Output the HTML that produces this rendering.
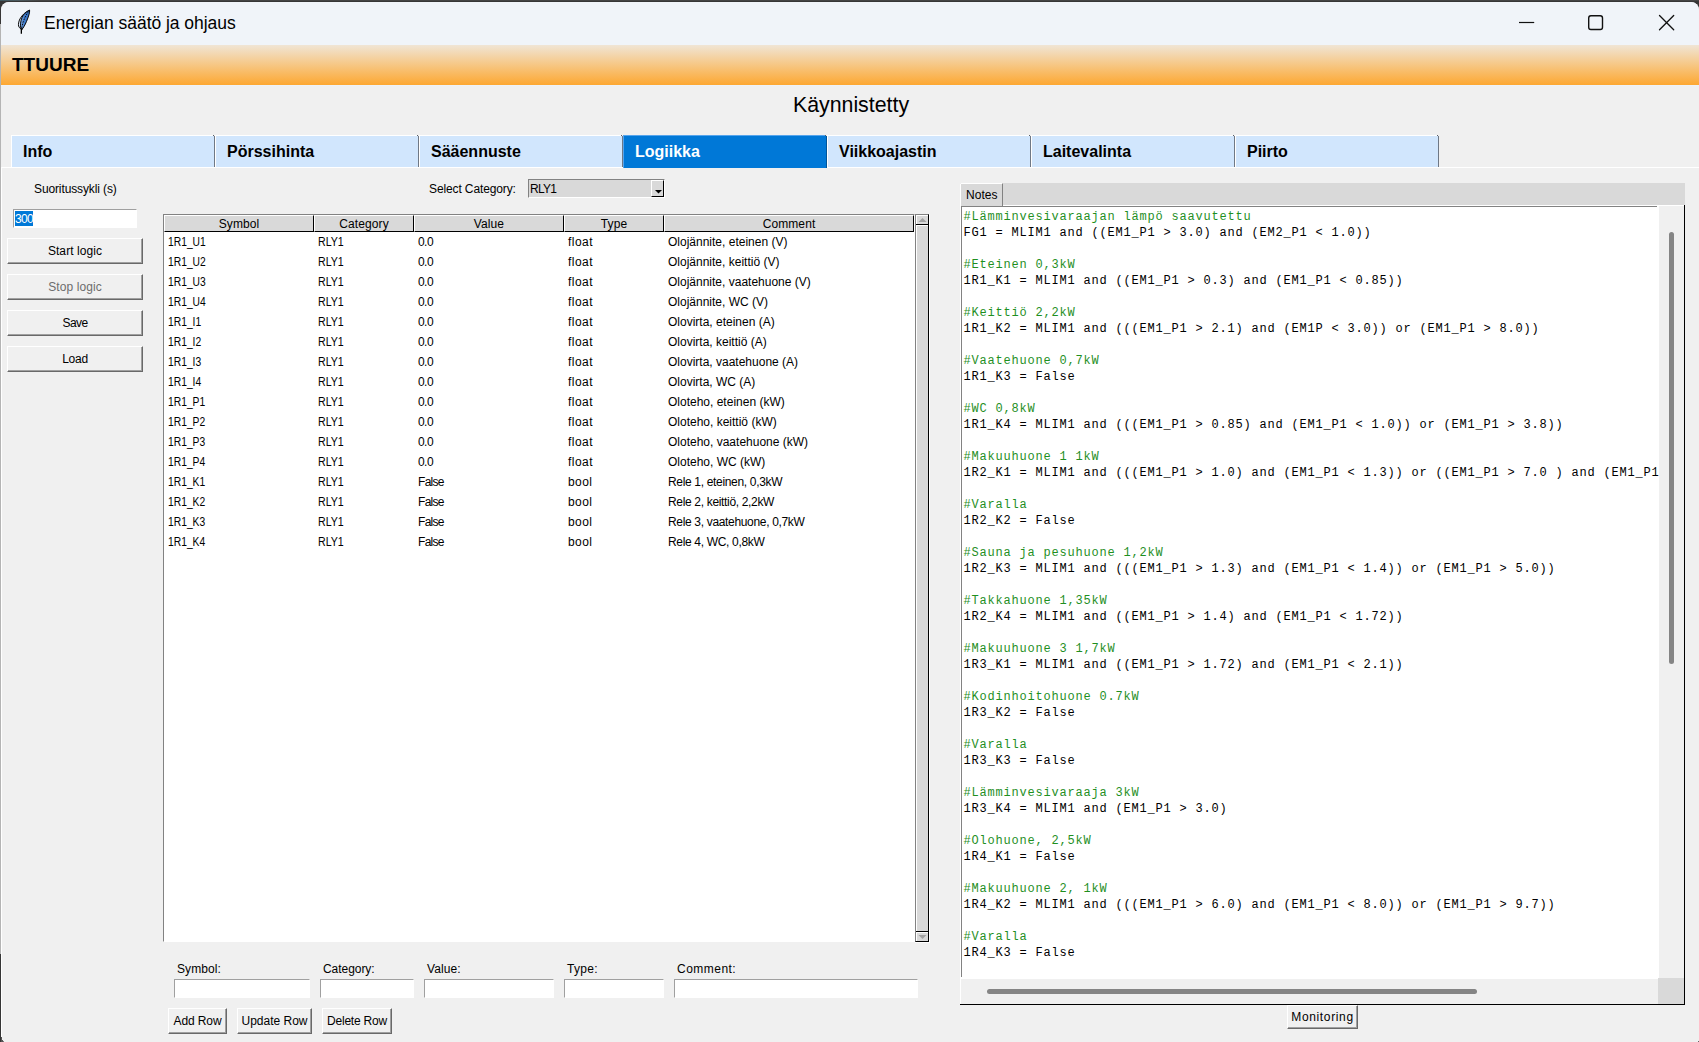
<!DOCTYPE html>
<html lang="fi"><head><meta charset="utf-8"><title>Energian säätö ja ohjaus</title>
<style>
html,body{margin:0;padding:0}
body{width:1699px;height:1042px;position:relative;overflow:hidden;background:#363636;font-family:"Liberation Sans",sans-serif;font-size:12px;color:#000;line-height:1}
div{position:absolute;box-sizing:border-box}
span{white-space:pre}
.t{position:absolute;white-space:pre;line-height:14px;height:14px;letter-spacing:0}
#topstrip{left:0;top:0;width:1699px;height:1px;background:linear-gradient(90deg,#3f5962 0,#4a5a60 18px,#444 40px,#444 100%)}
#edge{left:0;top:24px;width:1px;height:930px;background:#b4b4b4}
#win{left:1px;top:2px;width:1698px;height:1040px;background:#f0f0f0;border-radius:8px 8px 0 0}
#titlebar{left:1px;top:2px;width:1698px;height:43px;background:#f0f4f9;border-radius:8px 8px 0 0}
#title{left:44px;top:12px;font-size:17.5px;line-height:22px;white-space:pre;letter-spacing:-0.04px}
#hdr{left:1px;top:45px;width:1698px;height:40px;background:linear-gradient(#f0e5d5,#fda832)}
#hdrline{left:1px;top:85px;width:1698px;height:1px;background:#eef2f7}
#brand{left:12px;top:54px;font-weight:bold;font-size:19px;line-height:22px;white-space:pre}
#status{left:2px;top:93px;width:1698px;text-align:center;font-size:21.33px;line-height:25px;white-space:pre}
.tab{top:135px;width:204px;height:32px;background:#d1e6fd;border-left:1px solid #fff;border-top:1px solid #fff;border-right:1px solid #6f7885;margin-left:-1px}
.tab::after{content:"";position:absolute;right:-1px;top:-1px;width:1px;height:1px;background:#f0f0f0}
.tab::before{content:"";position:absolute;right:0;top:-1px;width:1px;height:1px;background:#5a5f66}
.tab span{position:absolute;left:11px;top:6px;font-weight:bold;font-size:16px;line-height:20px}
.tab.sel{background:#0078d7;height:33px;border-left-color:#55a4ec;border-top-color:#55a4ec;border-right-color:#00559a}
.tab.sel span{color:#fff}
#paneTop{left:1px;top:167px;width:1698px;height:1px;background:#fff}
#paneLeft{left:1px;top:167px;width:1px;height:875px;background:#fff}
.btn{background:#f0f0f0;border:1px solid;border-color:#fff #696969 #696969 #fff;box-shadow:inset -1px -1px 0 #a0a0a0, inset 1px 1px 0 #f0f0f0;text-align:center;letter-spacing:0.2px;white-space:pre}
.btn.dis{color:#6d6d6d}
.entry{background:#fff;border:1px solid;border-color:#a0a0a0 #fff #fff #a0a0a0}
.tree{left:164px;top:215px;width:750px;height:726px;background:#fff}
#treeBorder{left:163px;top:214px;width:752px;height:728px;border:1px solid;border-color:#828282 #fff #fff #828282;background:#fff}
.th{top:0;height:17px;background:#d9d9d9;border:1px solid;border-color:#fff #000 #000 #fff;text-align:center;line-height:17px;letter-spacing:0.1px}
.tr{left:0;width:750px;height:20px;line-height:20px}
.td{position:absolute;top:0}
.c0{display:inline-block;transform:scaleX(0.858);transform-origin:0 0}
.c1{display:inline-block;transform:scaleX(0.885);transform-origin:0 0}
.c2{letter-spacing:-0.55px}
.c3{letter-spacing:0.45px}
.c4{letter-spacing:0}
.notes{left:961px;top:206px;width:698px;height:773px;background:#fff;padding:1px 0 0 1px;overflow:hidden}
.notes-inner{left:2.4px;top:3px;font-family:"Liberation Mono",monospace;font-size:12px;letter-spacing:0.8px;line-height:16px}
.ln{position:static;height:16px;white-space:pre}
.ln.c{color:#1f8f1f}

</style></head>
<body>
<div id="topstrip"></div>
<div id="edge"></div>
<div id="win"></div>
<div id="titlebar"></div>
<svg style="position:absolute;left:14px;top:8px" width="20" height="28" viewBox="0 0 20 28">
<defs><linearGradient id="fg" x1="0" y1="0" x2="1" y2="0"><stop offset="0" stop-color="#7ea9e3"/><stop offset="0.45" stop-color="#3f7bcb"/><stop offset="1" stop-color="#2f6ec2"/></linearGradient></defs>
<path d="M15.6 2.2 C11.6 3.8 8.2 6.8 5.9 11 C4.6 13.6 4.2 16.6 4.6 18 C4.9 19.2 5.6 20 6.6 20.6 L8 21.3 Z" fill="#dfe8f6" stroke="#000" stroke-width="0.95" stroke-linejoin="round"/>
<path d="M15.6 2.2 C15.9 4.5 14.6 8.5 12.5 13.5 C11 17 9.3 20 8.0 21.3 L6.9 20.2 C6.0 17.5 6.5 13 8.1 9.3 C9.5 6.2 12 3.8 15.6 2.2 Z" fill="url(#fg)" stroke="#000" stroke-width="0.95" stroke-linejoin="round"/>
<path d="M14.6 3.6 C11.8 7 9.6 12 8.6 16 C8.2 17.6 7.9 19 7.7 20" fill="none" stroke="#000" stroke-width="0.9" stroke-dasharray="1.6 1.1"/>
<path d="M6.2 19.9 L8.5 21 L8.0 22.2 L8.0 25.7 L6.7 25.7 L6.7 22 Z" fill="#000"/>
</svg>
<div id="title">Energian säätö ja ohjaus</div>
<svg style="position:absolute;left:1510px;top:8px" width="180" height="30" viewBox="0 0 180 30">
<path d="M9 14.5 H24.2" stroke="#111" stroke-width="1.2" fill="none"/>
<rect x="78.7" y="7.7" width="13.8" height="13.8" rx="2.2" ry="2.2" fill="none" stroke="#111" stroke-width="1.4"/>
<path d="M149.5 7.5 L163.7 21.7 M163.7 7.5 L149.5 21.7" stroke="#111" stroke-width="1.3" fill="none" stroke-linecap="round"/>
</svg>
<div id="hdr"></div>
<div id="hdrline"></div>
<div id="brand">TTUURE</div>
<div id="status">Käynnistetty</div>
<div id="paneTop"></div>
<div id="paneLeft"></div>
<div class="tab" style="left:12px"><span>Info</span></div>
<div class="tab" style="left:216px"><span>Pörssihinta</span></div>
<div class="tab" style="left:420px"><span>Sääennuste</span></div>
<div class="tab sel" style="left:624px"><span>Logiikka</span></div>
<div class="tab" style="left:828px"><span>Viikkoajastin</span></div>
<div class="tab" style="left:1032px"><span>Laitevalinta</span></div>
<div class="tab" style="left:1236px"><span>Piirto</span></div>
<div class="t" style="left:34px;top:182px;letter-spacing:-0.12px">Suoritussykli (s)</div>
<div class="entry" style="left:13px;top:209px;width:124px;height:19px"></div>
<div style="left:15px;top:211px;width:18px;height:15px;background:#0078d7"></div>
<div class="t" style="left:15px;top:212px;color:#fff;letter-spacing:-0.7px">300</div>
<div class="btn" style="left:7px;top:238px;width:136px;height:26px;line-height:24px;letter-spacing:0.08px">Start logic</div>
<div class="btn dis" style="left:7px;top:274px;width:136px;height:26px;line-height:24px;letter-spacing:0.08px">Stop logic</div>
<div class="btn" style="left:7px;top:310px;width:136px;height:26px;line-height:24px;letter-spacing:-0.55px">Save</div>
<div class="btn" style="left:7px;top:346px;width:136px;height:26px;line-height:24px;letter-spacing:-0.25px">Load</div>
<div class="t" style="left:429px;top:182px;letter-spacing:-0.12px">Select Category:</div>
<div id="combo" style="left:528px;top:179px;width:137px;height:19px;background:#d9d9d9;border:1px solid;border-color:#828282 #fff #fff #828282"></div>
<div class="t" style="left:530px;top:182px;letter-spacing:-0.75px">RLY1</div>
<div style="left:651px;top:180px;width:13px;height:17px;background:#d9d9d9;border:1px solid;border-color:#fff #000 #000 #fff"></div>
<svg style="position:absolute;left:654px;top:189px" width="9" height="6" viewBox="0 0 9 6"><path d="M1 1 H8 L4.5 4.5 Z" fill="#000"/></svg>
<div id="treeBorder"></div>
<div class="tree">
<div class="th" style="left:0px;width:150px"><span>Symbol</span></div>
<div class="th" style="left:150px;width:100px"><span>Category</span></div>
<div class="th" style="left:250px;width:150px"><span>Value</span></div>
<div class="th" style="left:400px;width:100px"><span>Type</span></div>
<div class="th" style="left:500px;width:250px"><span>Comment</span></div>
<div class="tr" style="top:17px"><span class="td c0" style="left:4px">1R1_U1</span><span class="td c1" style="left:154px">RLY1</span><span class="td c2" style="left:254px">0.0</span><span class="td c3" style="left:404px">float</span><span class="td c4" style="left:504px">Olojännite, eteinen (V)</span></div>
<div class="tr" style="top:37px"><span class="td c0" style="left:4px">1R1_U2</span><span class="td c1" style="left:154px">RLY1</span><span class="td c2" style="left:254px">0.0</span><span class="td c3" style="left:404px">float</span><span class="td c4" style="left:504px">Olojännite, keittiö (V)</span></div>
<div class="tr" style="top:57px"><span class="td c0" style="left:4px">1R1_U3</span><span class="td c1" style="left:154px">RLY1</span><span class="td c2" style="left:254px">0.0</span><span class="td c3" style="left:404px">float</span><span class="td c4" style="left:504px">Olojännite, vaatehuone (V)</span></div>
<div class="tr" style="top:77px"><span class="td c0" style="left:4px">1R1_U4</span><span class="td c1" style="left:154px">RLY1</span><span class="td c2" style="left:254px">0.0</span><span class="td c3" style="left:404px">float</span><span class="td c4" style="left:504px">Olojännite, WC (V)</span></div>
<div class="tr" style="top:97px"><span class="td c0" style="left:4px">1R1_I1</span><span class="td c1" style="left:154px">RLY1</span><span class="td c2" style="left:254px">0.0</span><span class="td c3" style="left:404px">float</span><span class="td c4" style="left:504px">Olovirta, eteinen (A)</span></div>
<div class="tr" style="top:117px"><span class="td c0" style="left:4px">1R1_I2</span><span class="td c1" style="left:154px">RLY1</span><span class="td c2" style="left:254px">0.0</span><span class="td c3" style="left:404px">float</span><span class="td c4" style="left:504px">Olovirta, keittiö (A)</span></div>
<div class="tr" style="top:137px"><span class="td c0" style="left:4px">1R1_I3</span><span class="td c1" style="left:154px">RLY1</span><span class="td c2" style="left:254px">0.0</span><span class="td c3" style="left:404px">float</span><span class="td c4" style="left:504px">Olovirta, vaatehuone (A)</span></div>
<div class="tr" style="top:157px"><span class="td c0" style="left:4px">1R1_I4</span><span class="td c1" style="left:154px">RLY1</span><span class="td c2" style="left:254px">0.0</span><span class="td c3" style="left:404px">float</span><span class="td c4" style="left:504px">Olovirta, WC (A)</span></div>
<div class="tr" style="top:177px"><span class="td c0" style="left:4px">1R1_P1</span><span class="td c1" style="left:154px">RLY1</span><span class="td c2" style="left:254px">0.0</span><span class="td c3" style="left:404px">float</span><span class="td c4" style="left:504px">Oloteho, eteinen (kW)</span></div>
<div class="tr" style="top:197px"><span class="td c0" style="left:4px">1R1_P2</span><span class="td c1" style="left:154px">RLY1</span><span class="td c2" style="left:254px">0.0</span><span class="td c3" style="left:404px">float</span><span class="td c4" style="left:504px">Oloteho, keittiö (kW)</span></div>
<div class="tr" style="top:217px"><span class="td c0" style="left:4px">1R1_P3</span><span class="td c1" style="left:154px">RLY1</span><span class="td c2" style="left:254px">0.0</span><span class="td c3" style="left:404px">float</span><span class="td c4" style="left:504px">Oloteho, vaatehuone (kW)</span></div>
<div class="tr" style="top:237px"><span class="td c0" style="left:4px">1R1_P4</span><span class="td c1" style="left:154px">RLY1</span><span class="td c2" style="left:254px">0.0</span><span class="td c3" style="left:404px">float</span><span class="td c4" style="left:504px">Oloteho, WC (kW)</span></div>
<div class="tr" style="top:257px"><span class="td c0" style="left:4px">1R1_K1</span><span class="td c1" style="left:154px">RLY1</span><span class="td c2" style="left:254px;letter-spacing:-0.7px">False</span><span class="td c3" style="left:404px">bool</span><span class="td c4" style="left:504px;letter-spacing:-0.33px">Rele 1, eteinen, 0,3kW</span></div>
<div class="tr" style="top:277px"><span class="td c0" style="left:4px">1R1_K2</span><span class="td c1" style="left:154px">RLY1</span><span class="td c2" style="left:254px;letter-spacing:-0.7px">False</span><span class="td c3" style="left:404px">bool</span><span class="td c4" style="left:504px;letter-spacing:-0.33px">Rele 2, keittiö, 2,2kW</span></div>
<div class="tr" style="top:297px"><span class="td c0" style="left:4px">1R1_K3</span><span class="td c1" style="left:154px">RLY1</span><span class="td c2" style="left:254px;letter-spacing:-0.7px">False</span><span class="td c3" style="left:404px">bool</span><span class="td c4" style="left:504px;letter-spacing:-0.33px">Rele 3, vaatehuone, 0,7kW</span></div>
<div class="tr" style="top:317px"><span class="td c0" style="left:4px">1R1_K4</span><span class="td c1" style="left:154px">RLY1</span><span class="td c2" style="left:254px;letter-spacing:-0.7px">False</span><span class="td c3" style="left:404px">bool</span><span class="td c4" style="left:504px;letter-spacing:-0.33px">Rele 4, WC, 0,8kW</span></div>
</div>
<div id="tsb" style="left:915px;top:214px;width:14px;height:728px;background:#d9d9d9;border:1px solid;border-color:#828282 #000 #000 #828282"></div>
<div style="left:929px;top:214px;width:1px;height:729px;background:#fff"></div>
<div style="left:915px;top:942px;width:15px;height:1px;background:#fff"></div>
<div style="left:916px;top:215px;width:1px;height:726px;background:#fff"></div>
<div style="left:916px;top:215px;width:12px;height:1px;background:#fff"></div>
<div style="left:916px;top:225px;width:12px;height:1px;background:#fff"></div>
<div style="left:916px;top:932px;width:12px;height:1px;background:#fff"></div>
<div style="left:916px;top:224px;width:12px;height:1px;background:#000"></div>
<div style="left:916px;top:931px;width:12px;height:1px;background:#000"></div>
<svg style="position:absolute;left:918px;top:217px" width="9" height="6" viewBox="0 0 9 6"><path d="M0.5 5 L4.5 1 L8.5 5 Z" fill="#a3a3a3"/></svg>
<svg style="position:absolute;left:918px;top:934px" width="9" height="6" viewBox="0 0 9 6"><path d="M0.5 1 L4.5 5 L8.5 1 Z" fill="#a3a3a3"/></svg>
<div class="t" style="left:177px;top:962px;letter-spacing:0.1px">Symbol:</div>
<div class="t" style="left:323px;top:962px;letter-spacing:-0.05px">Category:</div>
<div class="t" style="left:427px;top:962px;letter-spacing:0.07px">Value:</div>
<div class="t" style="left:567px;top:962px;letter-spacing:0.3px">Type:</div>
<div class="t" style="left:677px;top:962px;letter-spacing:0.48px">Comment:</div>
<div class="entry" style="left:174px;top:979px;width:136px;height:19px"></div>
<div class="entry" style="left:320px;top:979px;width:94px;height:19px"></div>
<div class="entry" style="left:424px;top:979px;width:130px;height:19px"></div>
<div class="entry" style="left:564px;top:979px;width:100px;height:19px"></div>
<div class="entry" style="left:674px;top:979px;width:244px;height:19px"></div>
<div class="btn" style="left:168px;top:1008px;width:59px;height:26px;line-height:24px;letter-spacing:-0.1px">Add Row</div>
<div class="btn" style="left:237px;top:1008px;width:75px;height:26px;line-height:24px;letter-spacing:0px">Update Row</div>
<div class="btn" style="left:322px;top:1008px;width:70px;height:26px;line-height:24px;letter-spacing:-0.2px">Delete Row</div>
<div id="nbbar" style="left:1003px;top:183px;width:682px;height:22px;background:#d9d9d9"></div>
<div id="nbtab" style="left:960px;top:183px;width:43px;height:23px;background:#d9d9d9;border-left:1px solid #fff;border-top:1px solid #fff;border-right:1px solid #828282"></div>
<div class="t" style="left:966px;top:188px;letter-spacing:0.05px">Notes</div>
<div style="left:960px;top:183px;width:1px;height:1px;background:#f0f0f0"></div>
<div style="left:1003px;top:205px;width:682px;height:1px;background:#fff"></div>
<div style="left:960px;top:206px;width:1px;height:799px;background:#fff"></div>
<div class="notes"><div class="notes-inner"><div class="ln c">#Lämminvesivaraajan lämpö saavutettu</div><div class="ln">FG1 = MLIM1 and ((EM1_P1 &gt; 3.0) and (EM2_P1 &lt; 1.0))</div><div class="ln">&nbsp;</div><div class="ln c">#Eteinen 0,3kW</div><div class="ln">1R1_K1 = MLIM1 and ((EM1_P1 &gt; 0.3) and (EM1_P1 &lt; 0.85))</div><div class="ln">&nbsp;</div><div class="ln c">#Keittiö 2,2kW</div><div class="ln">1R1_K2 = MLIM1 and (((EM1_P1 &gt; 2.1) and (EM1P &lt; 3.0)) or (EM1_P1 &gt; 8.0))</div><div class="ln">&nbsp;</div><div class="ln c">#Vaatehuone 0,7kW</div><div class="ln">1R1_K3 = False</div><div class="ln">&nbsp;</div><div class="ln c">#WC 0,8kW</div><div class="ln">1R1_K4 = MLIM1 and (((EM1_P1 &gt; 0.85) and (EM1_P1 &lt; 1.0)) or (EM1_P1 &gt; 3.8))</div><div class="ln">&nbsp;</div><div class="ln c">#Makuuhuone 1 1kW</div><div class="ln">1R2_K1 = MLIM1 and (((EM1_P1 &gt; 1.0) and (EM1_P1 &lt; 1.3)) or ((EM1_P1 &gt; 7.0 ) and (EM1_P1 &lt; 8.0)))</div><div class="ln">&nbsp;</div><div class="ln c">#Varalla</div><div class="ln">1R2_K2 = False</div><div class="ln">&nbsp;</div><div class="ln c">#Sauna ja pesuhuone 1,2kW</div><div class="ln">1R2_K3 = MLIM1 and (((EM1_P1 &gt; 1.3) and (EM1_P1 &lt; 1.4)) or (EM1_P1 &gt; 5.0))</div><div class="ln">&nbsp;</div><div class="ln c">#Takkahuone 1,35kW</div><div class="ln">1R2_K4 = MLIM1 and ((EM1_P1 &gt; 1.4) and (EM1_P1 &lt; 1.72))</div><div class="ln">&nbsp;</div><div class="ln c">#Makuuhuone 3 1,7kW</div><div class="ln">1R3_K1 = MLIM1 and ((EM1_P1 &gt; 1.72) and (EM1_P1 &lt; 2.1))</div><div class="ln">&nbsp;</div><div class="ln c">#Kodinhoitohuone 0.7kW</div><div class="ln">1R3_K2 = False</div><div class="ln">&nbsp;</div><div class="ln c">#Varalla</div><div class="ln">1R3_K3 = False</div><div class="ln">&nbsp;</div><div class="ln c">#Lämminvesivaraaja 3kW</div><div class="ln">1R3_K4 = MLIM1 and (EM1_P1 &gt; 3.0)</div><div class="ln">&nbsp;</div><div class="ln c">#Olohuone, 2,5kW</div><div class="ln">1R4_K1 = False</div><div class="ln">&nbsp;</div><div class="ln c">#Makuuhuone 2, 1kW</div><div class="ln">1R4_K2 = MLIM1 and (((EM1_P1 &gt; 6.0) and (EM1_P1 &lt; 8.0)) or (EM1_P1 &gt; 9.7))</div><div class="ln">&nbsp;</div><div class="ln c">#Varalla</div><div class="ln">1R4_K3 = False</div><div class="ln">&nbsp;</div></div></div>
<div style="left:961px;top:206px;width:696px;height:1px;background:#828282"></div>
<div style="left:961px;top:206px;width:1px;height:771px;background:#828282"></div>
<div style="left:1659px;top:207px;width:25px;height:772px;background:#f0f0f0"></div>
<div style="left:962px;top:979px;width:697px;height:25px;background:#f0f0f0"></div>
<div style="left:1658px;top:978px;width:26px;height:26px;background:#d9d9d9"></div>
<div style="left:1684px;top:205px;width:1px;height:800px;background:#000"></div>
<div style="left:960px;top:1004px;width:725px;height:1px;background:#000"></div>
<div style="left:1669px;top:232px;width:5px;height:432px;background:#858585;border-radius:2.5px"></div>
<div style="left:987px;top:989px;width:490px;height:5px;background:#858585;border-radius:2.5px"></div>
<div class="btn" style="left:1287px;top:1005px;width:71px;height:24px;line-height:22px;letter-spacing:0.65px">Monitoring</div>
<div style="left:1698px;top:1041px;width:1px;height:1px;background:#666"></div>
<div style="left:1px;top:1037px;width:1px;height:5px;background:#555"></div>
<div style="left:2px;top:1040px;width:1px;height:2px;background:#555"></div>
<div style="left:3px;top:1041px;width:1px;height:1px;background:#777"></div>
</body></html>
